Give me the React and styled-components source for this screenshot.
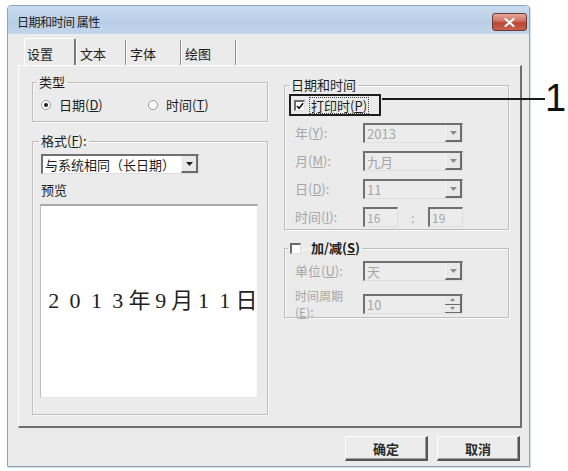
import React from "react";
import styled, { createGlobalStyle } from "styled-components";

const GlobalStyle = createGlobalStyle`
  html, body {
    margin: 0;
    padding: 0;
    background: #ffffff;
  }
  body {
    font-family: "Noto Sans CJK SC", "Liberation Sans", sans-serif;
    font-size: 13px;
    color: #1c1c1c;
  }
`;

const previewChars = ["2", "0", "1", "3", "年", "9", "月", "1", "1", "日"];

function Arrow({ disabled }) {
  return (
    <svg width="7" height="4" viewBox="0 0 7 4">
      <path d="M0 0 H7 L3.5 4 Z" fill={disabled ? "#8a8a8a" : "#222"} />
    </svg>
  );
}

function Select({ value, width, disabled }) {
  return (
    <Field $w={width} $disabled={disabled}>
      <FieldValue $disabled={disabled}>{value}</FieldValue>
      <DropButton>
        <Arrow disabled={disabled} />
      </DropButton>
    </Field>
  );
}

function Spin({ value, width }) {
  return (
    <Field $w={width} $disabled>
      <FieldValue $disabled>{value}</FieldValue>
      <SpinButtons>
        <SpinHalf>
          <svg width="5" height="3" viewBox="0 0 5 3">
            <path d="M0 3 H5 L2.5 0 Z" fill="#8a8a8a" />
          </svg>
        </SpinHalf>
        <SpinHalf>
          <svg width="5" height="3" viewBox="0 0 5 3">
            <path d="M0 0 H5 L2.5 3 Z" fill="#8a8a8a" />
          </svg>
        </SpinHalf>
      </SpinButtons>
    </Field>
  );
}

export default function App() {
  return (
    <>
      <GlobalStyle />
      <Page>
        <Window>
          <TitleBar>
            <Title>日期和时间 属性</Title>
            <CloseButton>
              <svg width="11" height="9" viewBox="0 0 11 9">
                <path
                  d="M1.5 1 L9.5 8 M9.5 1 L1.5 8"
                  stroke="#ffffff"
                  strokeWidth="2.2"
                  strokeLinecap="round"
                />
              </svg>
            </CloseButton>
          </TitleBar>

          <Body>
            <TabStrip>
              <Tab $w={52} $active>设置</Tab>
              <Tab $w={50}>文本</Tab>
              <Tab $w={55}>字体</Tab>
              <Tab $w={55}>绘图</Tab>
            </TabStrip>

            <Panel>
              <LeftColumn>
                <Group $h={48}>
                  <Legend>类型</Legend>
                  <RadioRow>
                    <RadioItem $w={107}>
                      <Radio $checked />
                      <span>日期(<u>D</u>)</span>
                    </RadioItem>
                    <RadioItem>
                      <Radio />
                      <span>时间(<u>T</u>)</span>
                    </RadioItem>
                  </RadioRow>
                </Group>

                <Group $h={282} $mt={11}>
                  <Legend $ml={6}>格式(<u>F</u>):</Legend>
                  <FormatBody>
                    <Select value="与系统相同（长日期）" width={158} />
                    <PreviewLabel>预览</PreviewLabel>
                    <PreviewBox>
                      <PreviewText>
                        {previewChars.map((c, i) => (
                          <Glyph key={i}>{c}</Glyph>
                        ))}
                      </PreviewText>
                    </PreviewBox>
                  </FormatBody>
                </Group>
              </LeftColumn>

              <RightColumn>
                <Group $h={153} $mt={3}>
                  <Legend $ml={4}>日期和时间</Legend>
                  <DateBody>
                    <FocusRow>
                      <CheckBox>
                        <svg width="9" height="8" viewBox="0 0 9 8">
                          <path
                            d="M1 4 L3.5 6.5 L8 1"
                            stroke="#111"
                            strokeWidth="1.8"
                            fill="none"
                          />
                        </svg>
                      </CheckBox>
                      <FocusText>打印时(<u>P</u>)</FocusText>
                    </FocusRow>
                    <FormRow>
                      <FieldLabel>年(<u>Y</u>):</FieldLabel>
                      <Select value="2013" width={100} disabled />
                    </FormRow>
                    <FormRow>
                      <FieldLabel>月(<u>M</u>):</FieldLabel>
                      <Select value="九月" width={100} disabled />
                    </FormRow>
                    <FormRow>
                      <FieldLabel>日(<u>D</u>):</FieldLabel>
                      <Select value="11" width={100} disabled />
                    </FormRow>
                    <FormRow>
                      <FieldLabel>时间(<u>I</u>):</FieldLabel>
                      <TimeBox>16</TimeBox>
                      <Colon>:</Colon>
                      <TimeBox>19</TimeBox>
                    </FormRow>
                  </DateBody>
                </Group>

                <Group $h={78} $mt={10}>
                  <Legend $ml={3}>
                    <LegendCheck>
                      <CheckBox />
                      <BoldText>加/减(<u>S</u>)</BoldText>
                    </LegendCheck>
                  </Legend>
                  <AddBody>
                    <FormRow>
                      <FieldLabel>单位(<u>U</u>):</FieldLabel>
                      <Select value="天" width={100} disabled />
                    </FormRow>
                    <FormRow>
                      <FieldLabel $narrow>
                        时间周期
                        <br />
                        (<u>E</u>):
                      </FieldLabel>
                      <Spin value="10" width={100} />
                    </FormRow>
                  </AddBody>
                </Group>
              </RightColumn>
            </Panel>

            <Footer>
              <DialogButton>确定</DialogButton>
              <DialogButton>取消</DialogButton>
            </Footer>
          </Body>
        </Window>

        <CalloutLine />
        <CalloutNumber>1</CalloutNumber>
      </Page>
    </>
  );
}

const Page = styled.div`
  position: relative;
  width: 568px;
  height: 471px;
  padding: 5px 0 0 7px;
  box-sizing: border-box;
  overflow: hidden;
`;

const Window = styled.div`
  width: 523px;
  height: 462px;
  box-sizing: border-box;
  border: 1px solid #8ea3ba;
  border-radius: 4px 4px 0 0;
  background: #ebebeb;
  display: flex;
  flex-direction: column;
  box-shadow: 1px 1px 0 #cfe0ef;
`;

const TitleBar = styled.div`
  height: 28px;
  flex: 0 0 28px;
  display: flex;
  align-items: center;
  justify-content: space-between;
  padding: 0 2px 0 9px;
  background: linear-gradient(to bottom, #cadcef 0%, #b9cfe7 55%, #c2d6ec 100%);
  border-radius: 3px 3px 0 0;
`;

const Title = styled.span`
  font-size: 12px;
  color: #1a1a1a;
  letter-spacing: -0.5px;
  margin-top: 2px;
`;

const CloseButton = styled.div`
  width: 35px;
  height: 18px;
  box-sizing: border-box;
  margin-top: 4px;
  border: 1px solid #6d3a32;
  border-radius: 3px;
  background: linear-gradient(to bottom, #e3a99c 0%, #d0705f 45%, #bd4533 55%, #c9614f 100%);
  display: flex;
  align-items: center;
  justify-content: center;
`;

const Body = styled.div`
  flex: 1;
  display: flex;
  flex-direction: column;
  padding: 6px 7px 0 10px;
`;

const TabStrip = styled.div`
  height: 25px;
  display: flex;
  padding-left: 6px;
`;

const Tab = styled.div`
  width: ${(p) => p.$w}px;
  box-sizing: border-box;
  display: flex;
  align-items: center;
  padding: 2px 0 0 4px;
  font-size: 13px;
  color: #1c1c1c;
  border-right: 1px solid #8d8d8d;
  box-shadow: 1px 0 0 #ffffff;
  ${(p) =>
    p.$active &&
    `
    border-left: 1px solid #ffffff;
    border-top: 1px solid #ffffff;
    border-right: 2px solid #7a7a7a;
    border-radius: 2px 2px 0 0;
    margin-top: -2px;
    padding-left: 2px;
  `}
`;

const Panel = styled.div`
  height: 363px;
  box-sizing: border-box;
  display: flex;
  gap: 16px;
  padding: 8px 0 0 13px;
  border-top: 1px solid #ffffff;
  border-left: 1px solid #ffffff;
  border-right: 2px solid #6f6f6f;
  border-bottom: 2px solid #6f6f6f;
`;

const LeftColumn = styled.div`
  width: 236px;
  display: flex;
  flex-direction: column;
`;

const RightColumn = styled.div`
  width: 225px;
  display: flex;
  flex-direction: column;
`;

const Group = styled.fieldset`
  margin: ${(p) => p.$mt || 0}px 0 0 0;
  padding: 0;
  min-width: 0;
  height: ${(p) => p.$h}px;
  box-sizing: border-box;
  border: 1px solid #bdbdbd;
  box-shadow: inset 1px 1px 0 #f8f8f8, 1px 1px 0 #f8f8f8;
`;

const Legend = styled.legend`
  margin-left: ${(p) => (p.$ml === undefined ? 4 : p.$ml)}px;
  padding: 0 2px;
  line-height: 16px;
  font-size: 13px;
  color: #1c1c1c;
`;

const RadioRow = styled.div`
  display: flex;
  align-items: center;
  padding: 5px 0 0 8px;
`;

const RadioItem = styled.div`
  width: ${(p) => (p.$w ? `${p.$w}px` : "auto")};
  display: flex;
  align-items: center;
  gap: 8px;
  font-size: 13px;
`;

const Radio = styled.span`
  width: 10px;
  height: 10px;
  border-radius: 50%;
  box-sizing: border-box;
  border: 1px solid #9a9a9a;
  background: #ffffff;
  display: flex;
  align-items: center;
  justify-content: center;

  &::after {
    content: "";
    width: 4px;
    height: 4px;
    border-radius: 50%;
    background: ${(p) => (p.$checked ? "#1c1c1c" : "transparent")};
  }
`;

const FormatBody = styled.div`
  display: flex;
  flex-direction: column;
  padding: 5px 0 0 8px;
`;

const Field = styled.div`
  width: ${(p) => p.$w}px;
  height: 20px;
  box-sizing: border-box;
  display: flex;
  align-items: stretch;
  background: ${(p) => (p.$disabled ? "#ececec" : "#ffffff")};
  border-top: 2px solid #707070;
  border-left: 2px solid #707070;
  border-right: 1px solid #dedede;
  border-bottom: 1px solid #dedede;
`;

const FieldValue = styled.span`
  flex: 1;
  display: flex;
  align-items: center;
  padding-left: 2px;
  font-size: 13px;
  white-space: nowrap;
  overflow: hidden;
  color: ${(p) => (p.$disabled ? "#a6a6a6" : "#1c1c1c")};
`;

const DropButton = styled.span`
  width: 17px;
  display: flex;
  align-items: center;
  justify-content: center;
  border-left: 1px solid #f4f4f4;
  border-right: 2px solid #6c6c6c;
  border-bottom: 2px solid #6c6c6c;
  box-sizing: border-box;
  background: #e9e9e9;
`;

const SpinButtons = styled.span`
  width: 17px;
  display: flex;
  flex-direction: column;
  border-right: 2px solid #6c6c6c;
  box-sizing: border-box;
`;

const SpinHalf = styled.span`
  flex: 1;
  display: flex;
  align-items: center;
  justify-content: center;
  border-bottom: 1px solid #6c6c6c;
  background: #e9e9e9;
`;

const PreviewLabel = styled.div`
  margin-top: 8px;
  height: 16px;
  line-height: 16px;
  font-size: 13px;
`;

const PreviewBox = styled.div`
  margin-top: 6px;
  margin-left: -1px;
  width: 218px;
  height: 194px;
  box-sizing: border-box;
  background: #ffffff;
  border-top: 2px solid #a9a9a9;
  border-left: 1px solid #bdbdbd;
  border-right: 1px solid #e6e6e6;
  border-bottom: 1px solid #e6e6e6;
  display: flex;
  align-items: center;
  padding-left: 2px;
`;

const PreviewText = styled.div`
  display: flex;
  margin-top: -2px;
`;

const Glyph = styled.span`
  width: 21.4px;
  text-align: center;
  font-family: "Liberation Serif", "Noto Sans CJK SC", serif;
  font-size: 22px;
  line-height: 24px;
  color: #222222;
`;

const DateBody = styled.div`
  display: flex;
  flex-direction: column;
  gap: 8px;
  padding: 1px 0 0 4px;
`;

const FocusRow = styled.div`
  align-self: flex-start;
  height: 22px;
  width: 92px;
  box-sizing: border-box;
  display: flex;
  align-items: center;
  gap: 5px;
  padding-left: 3px;
  border: 2px solid #1e1e1e;
  margin-bottom: -1px;
`;

const CheckBox = styled.span`
  width: 11px;
  height: 11px;
  box-sizing: border-box;
  border-top: 2px solid #6a6a6a;
  border-left: 2px solid #6a6a6a;
  border-right: 1px solid #e0e0e0;
  border-bottom: 1px solid #e0e0e0;
  background: #ffffff;
  display: flex;
  align-items: center;
  justify-content: center;
`;

const FocusText = styled.span`
  font-size: 13px;
  outline: 1px dotted #444;
  padding: 0 1px;
  line-height: 15px;
`;

const FormRow = styled.div`
  display: flex;
  align-items: center;
  min-height: 20px;
  padding-left: 6px;
`;

const FieldLabel = styled.span`
  width: ${(p) => (p.$narrow ? 58 : 68)}px;
  margin-right: ${(p) => (p.$narrow ? 10 : 0)}px;
  font-size: ${(p) => (p.$narrow ? 12 : 13)}px;
  line-height: ${(p) => (p.$narrow ? 16 : 14)}px;
  color: #a6a6a6;
`;

const TimeBox = styled.span`
  width: 35px;
  height: 20px;
  box-sizing: border-box;
  display: flex;
  align-items: center;
  padding-left: 2px;
  font-size: 12px;
  color: #a6a6a6;
  background: #ececec;
  border-top: 2px solid #707070;
  border-left: 2px solid #707070;
  border-right: 1px solid #dedede;
  border-bottom: 1px solid #dedede;
`;

const Colon = styled.span`
  width: 30px;
  text-align: center;
  color: #a6a6a6;
  font-size: 12px;
`;

const LegendCheck = styled.span`
  display: flex;
  align-items: center;
  gap: 10px;
`;

const BoldText = styled.span`
  font-weight: bold;
  font-size: 13px;
`;

const AddBody = styled.div`
  display: flex;
  flex-direction: column;
  gap: 7px;
  padding: 5px 0 0 4px;
`;

const Footer = styled.div`
  display: flex;
  justify-content: flex-end;
  gap: 9px;
  padding: 8px 2px 0 0;
`;

const DialogButton = styled.div`
  width: 83px;
  height: 25px;
  box-sizing: border-box;
  display: flex;
  align-items: center;
  justify-content: center;
  font-size: 13px;
  font-weight: bold;
  color: #2a2a2a;
  background: #ececec;
  border-top: 1px solid #ffffff;
  border-left: 1px solid #ffffff;
  border-right: 2px solid #555555;
  border-bottom: 2px solid #555555;
  box-shadow: inset -1px -1px 0 #a0a0a0;
`;

const CalloutLine = styled.div`
  position: absolute;
  left: 382px;
  top: 98px;
  width: 163px;
  height: 2px;
  background: #1a1a1a;
`;

const CalloutNumber = styled.div`
  position: absolute;
  left: 545px;
  top: 76px;
  font-family: "Liberation Sans", Arial, sans-serif;
  font-size: 38px;
  line-height: 44px;
  color: #111111;
`;
